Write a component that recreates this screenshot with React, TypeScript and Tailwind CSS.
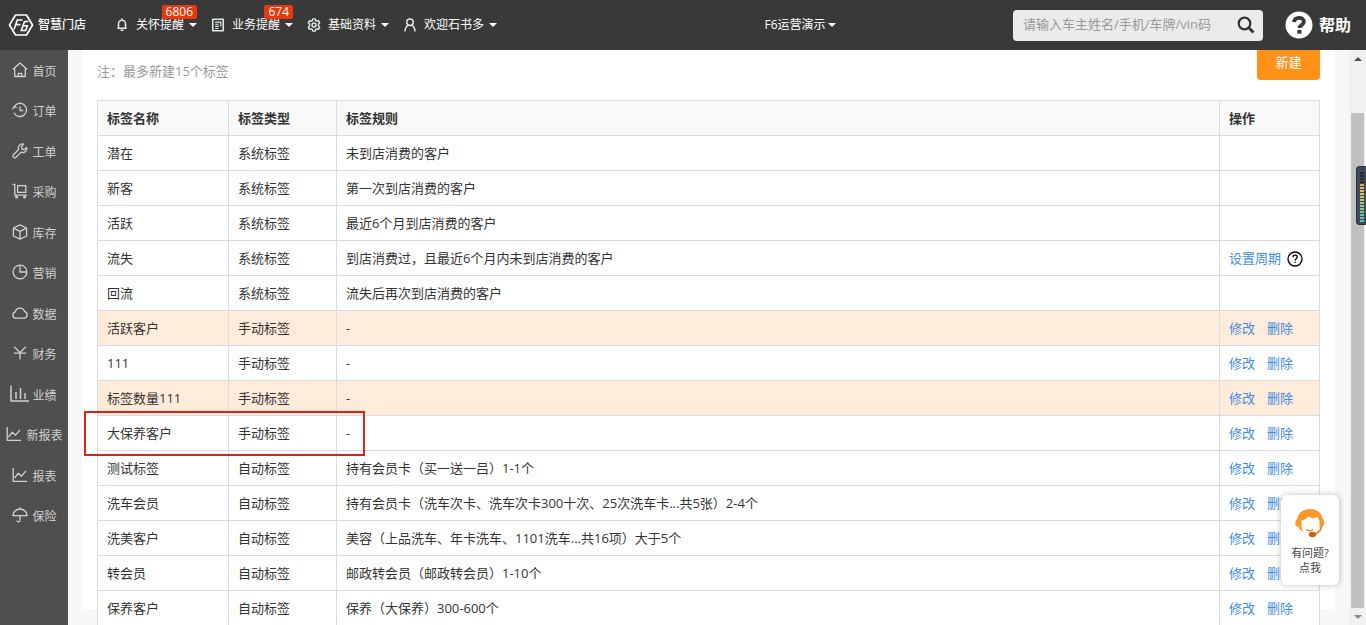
import type { ReactNode } from 'react';
import { clsx } from 'clsx';

interface TagRow {
  name: string;
  type: string;
  rule: string;
  actions: string[];
  hint?: boolean;
  highlighted?: boolean;
}

const MANUAL = ['修改', '删除'];

const rows: TagRow[] = [
  { name: '潜在', type: '系统标签', rule: '未到店消费的客户', actions: [] },
  { name: '新客', type: '系统标签', rule: '第一次到店消费的客户', actions: [] },
  { name: '活跃', type: '系统标签', rule: '最近6个月到店消费的客户', actions: [] },
  {
    name: '流失',
    type: '系统标签',
    rule: '到店消费过，且最近6个月内未到店消费的客户',
    actions: ['设置周期'],
    hint: true,
  },
  { name: '回流', type: '系统标签', rule: '流失后再次到店消费的客户', actions: [] },
  { name: '活跃客户', type: '手动标签', rule: '-', actions: MANUAL, highlighted: true },
  { name: '111', type: '手动标签', rule: '-', actions: MANUAL },
  { name: '标签数量111', type: '手动标签', rule: '-', actions: MANUAL, highlighted: true },
  { name: '大保养客户', type: '手动标签', rule: '-', actions: MANUAL },
  { name: '测试标签', type: '自动标签', rule: '持有会员卡（买一送一吕）1-1个', actions: MANUAL },
  {
    name: '洗车会员',
    type: '自动标签',
    rule: '持有会员卡（洗车次卡、洗车次卡300十次、25次洗车卡...共5张）2-4个',
    actions: MANUAL,
  },
  {
    name: '洗美客户',
    type: '自动标签',
    rule: '美容（上品洗车、年卡洗车、1101洗车...共16项）大于5个',
    actions: MANUAL,
  },
  { name: '转会员', type: '自动标签', rule: '邮政转会员（邮政转会员）1-10个', actions: MANUAL },
  { name: '保养客户', type: '自动标签', rule: '保养（大保养）300-600个', actions: MANUAL },
];

function Icon({ children, className = 'w-4 h-4' }: { children: ReactNode; className?: string }) {
  return (
    <svg
      viewBox="0 0 16 16"
      fill="none"
      stroke="currentColor"
      strokeWidth="1.3"
      strokeLinejoin="round"
      className={clsx('shrink-0', className)}
      aria-hidden="true"
    >
      {children}
    </svg>
  );
}

const lineChart = (
  <>
    <path d="M1.2 1v13.3H15" />
    <path d="M2.5 11 6.3 6.2l3.2 3L14 3.8" />
  </>
);

const menu: { label: string; icon: ReactNode }[] = [
  {
    label: '首页',
    icon: (
      <>
        <path d="M.7 7.6 8 1l7.3 6.6" />
        <path d="M2.7 6.3v8.2h10.6V6.3" />
        <path d="M6.3 14.5v-3.2h3.4v3.2" />
      </>
    ),
  },
  {
    label: '订单',
    icon: (
      <>
        <path d="M2.2 4.6A6.6 6.6 0 1 1 2 10.8" />
        <path d="M.6 7.2 2 4.6l2.6 1" />
        <path d="M8 4.6v3.9h3.2" />
      </>
    ),
  },
  {
    label: '工单',
    icon: (
      <path d="M11.6 1.2a4 4 0 0 0-5 5.3L1 12.2c-.5 1.7.9 3 2.5 2.5l5.7-5.6a4 4 0 0 0 5.5-4.7l-2.4 2.2-2.3-.6-.6-2.3z" />
    ),
  },
  {
    label: '采购',
    icon: (
      <>
        <path d="M.4 1.4h2.4v10.8H15" />
        <path d="M5.6 2.6h8.2v6.8H5.6z" />
        <circle cx="4.6" cy="14" r=".9" />
        <circle cx="12.6" cy="14" r=".9" />
      </>
    ),
  },
  {
    label: '库存',
    icon: (
      <>
        <path d="M8 .9 14.6 4v8L8 15.1 1.4 12V4z" />
        <path d="M1.6 4.1 8 7.4l6.4-3.3M8 7.4V15" />
      </>
    ),
  },
  {
    label: '营销',
    icon: (
      <>
        <circle cx="8" cy="8" r="6.9" />
        <path d="M8 1.1V8h6.9" />
      </>
    ),
  },
  {
    label: '数据',
    icon: (
      <path d="M4 13.2a3.2 3.2 0 0 1-.7-6.3 4.8 4.8 0 0 1 9.3-.2 3.3 3.3 0 0 1-.6 6.5z" />
    ),
  },
  {
    label: '财务',
    icon: <path d="M2.2 1.6 8 7.8l5.8-6.2M8 7.8v6.8M1.8 8.2h12.4" />,
  },
  {
    label: '业绩',
    icon: <path d="M-1 -.5v15.600h18M4 6v7M8.500 2v11M13 7v6" strokeWidth="1.500" />,
  },
  { label: '新报表', icon: lineChart },
  { label: '报表', icon: lineChart },
  {
    label: '保险',
    icon: (
      <>
        <path d="M.9 8.600a7.100 6.600 0 0 1 14.200 0z" />
        <path d="M8 .6V2M8 8.600v4.700c0 2-3 2-3 .2" />
      </>
    ),
  },
];

const gearTeeth = 'M6.600 1h2.800l.5 1.900 1.300.7 1.900-.5 1.400 2.400-1.400 1.400v2.200l1.400 1.400-1.400 2.400-1.900-.5-1.300.7-.5 1.900H6.600l-.5-1.900-1.300-.7-1.900.5-1.400-2.400 1.400-1.400V6.900L1.500 5.500l1.400-2.400 1.900.5 1.300-.7z';

const topNav: { label: string; badge?: string; icon: ReactNode }[] = [
  {
    label: '关怀提醒',
    badge: '6806',
    icon: (
      <path
        d="M4 11.500V6.500a4 4 0 0 1 8 0v5M2.600 11.700h10.800M8 .6v2M6.300 14h3.400"
        strokeWidth="1.800"
      />
    ),
  },
  {
    label: '业务提醒',
    badge: '674',
    icon: (
      <>
        <path d="M2 1.500h12v13H2z" strokeWidth="1.800" />
        <path d="M4.800 4.700h6.400v5M4.800 7.200h4M4.800 9.600h4M4.800 12h3.500" />
      </>
    ),
  },
  {
    label: '基础资料',
    icon: (
      <>
        <path d={gearTeeth} strokeWidth="1.700" />
        <circle cx="8" cy="8" r="2.200" strokeWidth="1.700" />
      </>
    ),
  },
  {
    label: '欢迎石书多',
    icon: (
      <>
        <circle cx="8" cy="4.800" r="3.700" strokeWidth="1.700" />
        <path
          d="M2.300 15.500c0-3.700 1.500-6 3.800-7.300M13.700 15.500c0-3.700-1.500-6-3.800-7.300"
          strokeWidth="1.700"
        />
      </>
    ),
  },
];

function Caret() {
  return (
    <svg viewBox="0 0 8 4" className="w-2 h-1 shrink-0" fill="currentColor" aria-hidden="true">
      <path d="M0 0h8L4 4z" />
    </svg>
  );
}

function TopBar() {
  return (
    <header className="flex items-center h-[50px] shrink-0 bg-[#393939] text-white text-xs">
      <a href="#" className="flex items-center gap-1 pl-2 w-[114px] font-medium">
        <svg viewBox="0 0 26 24" className="w-[26px] h-6" fill="none" stroke="currentColor" aria-hidden="true">
          <path d="M7.500 2h11L24.500 12l-6 10h-11L1.500 12z" strokeWidth="1.700" strokeLinejoin="round" />
          <path d="M6 16.500 9.300 7h5.200M7.800 11.600h4.700" strokeWidth="1.600" />
          <path d="M20.300 8.500h-3.800l-3.200 9h4.300l1.700-4.700h-4.300" strokeWidth="1.600" />
        </svg>
        智慧门店
      </a>
      <nav className="flex items-center gap-[13px]">
        {topNav.map((item) => (
          <button key={item.label} type="button" className="relative flex items-center">
            <Icon className="w-4 h-3.5 mr-1.5 text-[#dfe8e4]">{item.icon}</Icon>
            <span className="mr-[5px]">{item.label}</span>
            <Caret />
            {item.badge && (
              <span className="absolute right-0 -top-3 px-1 h-3.5 leading-[14px] rounded-xs bg-[#e8380d]">
                {item.badge}
              </span>
            )}
          </button>
        ))}
      </nav>
      <div className="flex-1 flex justify-center">
        <button type="button" className="flex items-center gap-0.5 pl-[90px]">
          F6运营演示
          <Caret />
        </button>
      </div>
      <form className="flex items-center w-[250px] h-[31px] pl-2.5 pr-2 rounded-sm bg-[#ebebeb]">
        <input
          type="text"
          aria-label="搜索车主"
          placeholder="请输入车主姓名/手机/车牌/vin码"
          className="flex-1 min-w-0 text-[13px] outline-none text-[#333] placeholder:text-[#999]"
        />
        <button type="button" aria-label="搜索" className="text-[#333]">
          <svg viewBox="0 0 18 18" className="w-[18px] h-[18px]" fill="none" stroke="currentColor">
            <circle cx="7.500" cy="7.500" r="5.800" strokeWidth="2.200" />
            <path d="m11.800 11.800 4.700 4.700" strokeWidth="2.800" />
          </svg>
        </button>
      </form>
      <a href="#" className="flex items-center gap-1.5 ml-[22px] mr-[15px] text-base font-bold">
        <svg viewBox="0 0 28 28" className="w-7 h-7" aria-hidden="true">
          <circle cx="14" cy="14" r="13.500" fill="#fff" />
          <path d="M9 11.200c.2-2.900 2.200-4.300 5-4.300 2.900 0 4.900 1.500 4.900 3.900 0 3.300-4.400 3.200-4.400 6.200" fill="none" stroke="#393939" strokeWidth="3.800" />
          <path d="M12.300 18.900h4.200v3.800h-4.200z" fill="#393939" />
        </svg>
        帮助
      </a>
    </header>
  );
}

function SideMenu() {
  return (
    <nav className="w-[68px] shrink-0 bg-[#4f4f4f] text-[#d0d0d0] text-xs">
      <ul>
        {menu.map((item) => (
          <li key={item.label} className="odd:h-10 even:h-[41px]">
            <a href="#" className="flex items-center justify-center gap-1 h-full pl-px pt-[3px]">
              <Icon className="w-4 h-4 mb-1 overflow-visible">{item.icon}</Icon>
              {item.label}
            </a>
          </li>
        ))}
      </ul>
    </nav>
  );
}

function TagTable() {
  const cell = 'border border-[#d9dce2] px-[9px] pt-px pb-0';
  return (
    <table className="w-full table-fixed border-collapse bg-white text-left">
      <colgroup>
        <col className="w-[131px]" />
        <col className="w-[108px]" />
        <col />
        <col className="w-[100px]" />
      </colgroup>
      <thead>
        <tr className="h-[35px] bg-[#f9f9f9]">
          {['标签名称', '标签类型', '标签规则', '操作'].map((title) => (
            <th key={title} scope="col" className={clsx(cell, 'font-bold')}>
              {title}
            </th>
          ))}
        </tr>
      </thead>
      <tbody>
        {rows.map((row) => (
          <tr key={row.name} className={clsx('h-[35px]', row.highlighted && 'bg-[#feebd9]')}>
            <td className={cell}>{row.name}</td>
            <td className={cell}>{row.type}</td>
            <td className={cell}>{row.rule}</td>
            <td className={cell}>
              <div className="flex items-center gap-3 whitespace-nowrap text-[#3f8de0]">
                {row.actions.map((action) => (
                  <a key={action} href="#">
                    {action}
                  </a>
                ))}
                {row.hint && (
                  <button type="button" aria-label="说明" className="-ml-1.5 text-black">
                    <Icon className="w-4 h-4">
                      <circle cx="8" cy="8" r="7" />
                      <path d="M5.900 6.300c.1-1.400.9-2.100 2.200-2.100s2.100.8 2.100 1.900c0 1.600-2.100 1.700-2.100 3.500M8.100 10.700v1.400" />
                    </Icon>
                  </button>
                )}
              </div>
            </td>
          </tr>
        ))}
      </tbody>
    </table>
  );
}

function ScrollBar() {
  return (
    <div className="flex flex-col items-center w-[17px] shrink-0 bg-[#f1f1f1] text-[#505050]">
      <div className="flex items-center h-[17px]">
        <span className="rotate-180 flex">
          <Caret />
        </span>
      </div>
      <div className="flex-1 w-[13px] mt-[46px] bg-[#c1c1c1]" />
      <div className="flex items-center h-[17px] text-[#8a8a8a]">
        <Caret />
      </div>
    </div>
  );
}

// small level meter docked to the right edge of the window
function LevelMeter() {
  const colors = ['#252a33', '#252a33', '#252a33', '#252a33', '#e0a94a', '#e0b850', '#dcc255', '#d0c85c', '#c6ca60', '#bccb66', '#a8cc72', '#94cc7e', '#82cc8a', '#70ca96', '#62c8a0', '#5ac8a8', '#54c8ae'];
  return (
    <div className="absolute right-0 top-[166px] w-2.5 h-[59px] rounded-l-sm bg-[#414956] border border-r-0 border-[#2b313b]">
      <svg viewBox="0 0 6 54" className="w-1.5 h-[54px] mt-0.5 ml-0.5" shapeRendering="crispEdges" aria-hidden="true">
        {colors.map((color, i) => (
          <rect key={i} x="1" y={3 + i * 3} width="4" height="2" fill={color} />
        ))}
      </svg>
    </div>
  );
}

function ServiceWidget() {
  return (
    <button
      type="button"
      className="absolute right-[27px] bottom-10 flex flex-col items-center w-[58px] h-[90px] pt-3 rounded-md bg-white text-[11px] leading-[15px] text-[#444] shadow-[0_0_6px_rgba(0,0,0,0.25)]"
    >
      <svg viewBox="0 0 32 32" className="w-8 h-8 mb-1.5" aria-hidden="true">
        <path d="M3.500 11.500C4.500 5.500 9.500 2 16 2s11.500 3.500 12.500 9.500c2.300 1.500 2.500 7-.3 8.500-1.200 1-2.700.5-2.700-.5v-6c-1-1-1.500-2-2-3.500-3 1.500-6.500 1-9.500-.5-1.500 2.500-4 3.500-6.500 4v5c0 3 .5 4.500 2 6.500-2.500-1-4.300-3-5.200-5.500C.5 20.500.5 13.500 3.500 11.500z" fill="#f9962a" />
        <path d="M12 22.500c2.300 1.600 5 1.600 7.500 0" fill="none" stroke="#f08519" strokeWidth="1.300" />
        <path d="M27.500 19.500c-.8 4-3 6.500-7 7.500" fill="none" stroke="#f08519" strokeWidth="1.600" />
        <ellipse cx="18.500" cy="27.500" rx="3.700" ry="2.700" fill="#c9651a" />
      </svg>
      <span>有问题?</span>
      <span>点我</span>
    </button>
  );
}

export default function App() {
  return (
    <div className="relative flex flex-col h-screen overflow-hidden font-['Open_Sans','Noto_Sans_CJK_SC',sans-serif] text-[13px] text-[#333]">
      <TopBar />
      <div className="flex flex-1 min-h-0">
        <SideMenu />
        <main className="flex-1 min-w-0 overflow-hidden bg-[#f7f7f7] px-3.5 pb-4">
          <div className="h-full bg-white px-[15px]">
            <div className="flex items-start justify-between h-[50px]">
              <p className="pt-3 leading-[18px] text-[#999]">注：最多新建15个标签</p>
              <button type="button" className="w-[63px] h-[34px] -mt-1 rounded-sm bg-[#ff9116] text-white">
                新建
              </button>
            </div>
            <div className="relative">
              <TagTable />
              {/* Marked row */}
              <div className="absolute -left-[13px] top-[311px] w-[281px] h-[45px] border-2 border-[#d9221c] pointer-events-none" />
            </div>
          </div>
        </main>
        <ScrollBar />
      </div>
      <LevelMeter />
      <ServiceWidget />
    </div>
  );
}
